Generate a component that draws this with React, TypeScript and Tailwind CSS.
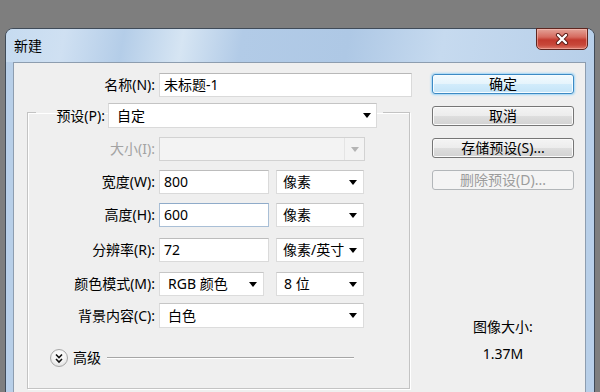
import React from "react";

const Arrow = ({ color = "#000" }: { color?: string }) => (
  <svg width="8" height="5" viewBox="0 0 8 5" className="shrink-0">
    <path d="M0 0H8L4 5Z" fill={color} />
  </svg>
);

const Label = ({ children, disabled }: { children: React.ReactNode; disabled?: boolean }) => (
  <div className={disabled ? "w-[127px] text-right text-[#a3a3a3]" : "w-[127px] text-right"}>{children}</div>
);

export default function App() {
  return (
    <div
      className="w-[600px] h-[392px] overflow-hidden bg-[#7e7e7e] pt-[28px] px-[5px] text-[14px] leading-[18px] text-black"
      style={{ fontFamily: '"Noto Sans", "Noto Sans CJK SC", sans-serif' }}
    >
      <div className="h-[420px] rounded-t-[8px] border border-[#404b58] bg-[#b8cfe8] flex flex-col">
        {/* title bar */}
        <div className="h-[33px] shrink-0 rounded-t-[7px] flex items-start justify-between pl-[8px] pr-[6px] bg-[linear-gradient(100deg,#c6dbf0_0%,#cfe0f2_10%,#b4cde8_20%,#d6e5f3_30%,#b2cbe7_40%,#aec8e5_58%,#c6daef_74%,#b7cfe9_100%)]">
          <div className="mt-[8px] text-black">新建</div>
          <div className="-mt-[1px] w-[52px] h-[22px] rounded-b-[5px] border border-[#5e2620] bg-[linear-gradient(#e3a398_0%,#d66b5f_40%,#c23a2e_55%,#c8483a_80%,#dc7a6c_100%)] shadow-[inset_0_0_0_1px_rgba(255,200,190,0.5)] flex items-center justify-center">
            <svg width="14" height="12" viewBox="0 0 14 12">
              <path d="M3 2L11 10M11 2L3 10" stroke="#5a1c16" strokeWidth="4.2" strokeLinecap="round" />
              <path d="M3 2L11 10M11 2L3 10" stroke="#ffffff" strokeWidth="2.4" strokeLinecap="round" />
            </svg>
          </div>
        </div>

        {/* content */}
        <div className="ml-[7px] mr-[8px] flex-1 border border-[#8d9daf] bg-[#efefef] flex">
          {/* left column */}
          <div className="w-[398px] pt-[10px] flex flex-col">
            <div className="flex items-center h-[24px]">
              <div className="w-[141px] text-right">名称(N):</div>
              <div className="ml-[4px] w-[253px] h-[24px] bg-white border border-[#dadada] border-t-[#b8b8b8] flex items-center pl-[4px]">
                未标题-1
              </div>
            </div>

            <fieldset className="mt-[6px] ml-[13px] w-[383px] border border-[#c3c3c3] shadow-[inset_1px_1px_0_#ffffff,1px_1px_0_#ffffff] pb-[21px]">
              <legend className="ml-[8px] pr-[6px] h-[18px]">
                <div className="flex items-start h-[18px]">
                  <div className="w-[69px] text-right mt-[4px]">预设(P):</div>
                  <div className="ml-[3px] w-[269px] h-[25px] shrink-0 bg-white border border-[#dadada] border-t-[#c4c4c4] flex items-center justify-between pl-[8px] pr-[5px]">
                    <span>自定</span>
                    <Arrow />
                  </div>
                </div>
              </legend>

              <div className="mt-[16px] flex items-center h-[24px]">
                <Label disabled>大小(I):</Label>
                <div className="ml-[4px] w-[206px] h-[24px] bg-[#f3f3f3] border border-[#d2d2d2] flex items-center justify-end">
                  <div className="h-full w-[20px] border-l border-[#e4e4e4] flex items-center justify-center">
                    <Arrow color="#b4b4b4" />
                  </div>
                </div>
              </div>

              <div className="mt-[9px] flex items-center h-[24px]">
                <Label>宽度(W):</Label>
                <div className="ml-[4px] w-[110px] h-[24px] bg-white border border-[#dadada] border-t-[#bcbcbc] flex items-center pl-[4px]">800</div>
                <div className="ml-[7px] w-[88px] h-[24px] bg-white border border-[#dcdcdc] border-t-[#c6c6c6] flex items-center justify-between pl-[6px] pr-[6px]">
                  <span>像素</span>
                  <Arrow />
                </div>
              </div>

              <div className="mt-[9px] flex items-center h-[24px]">
                <Label>高度(H):</Label>
                <div className="ml-[4px] w-[110px] h-[24px] bg-white border border-[#a9bfd6] border-t-[#8fabc9] flex items-center pl-[4px]">600</div>
                <div className="ml-[7px] w-[88px] h-[24px] bg-white border border-[#dcdcdc] border-t-[#c6c6c6] flex items-center justify-between pl-[6px] pr-[6px]">
                  <span>像素</span>
                  <Arrow />
                </div>
              </div>

              <div className="mt-[11px] flex items-center h-[24px]">
                <Label>分辨率(R):</Label>
                <div className="ml-[4px] w-[110px] h-[24px] bg-white border border-[#dadada] border-t-[#bcbcbc] flex items-center pl-[4px]">72</div>
                <div className="ml-[7px] w-[88px] h-[24px] bg-white border border-[#dcdcdc] border-t-[#c6c6c6] flex items-center justify-between pl-[6px] pr-[6px]">
                  <span>像素/英寸</span>
                  <Arrow />
                </div>
              </div>

              <div className="mt-[10px] flex items-center h-[24px]">
                <Label>颜色模式(M):</Label>
                <div className="ml-[4px] w-[105px] h-[24px] bg-white border border-[#dcdcdc] border-t-[#c6c6c6] flex items-center justify-between pl-[8px] pr-[6px]">
                  <span>RGB 颜色</span>
                  <Arrow />
                </div>
                <div className="ml-[12px] w-[88px] h-[24px] bg-white border border-[#dcdcdc] border-t-[#c6c6c6] flex items-center justify-between pl-[7px] pr-[6px]">
                  <span>8 位</span>
                  <Arrow />
                </div>
              </div>

              <div className="mt-[7px] flex items-center h-[25px]">
                <Label>背景内容(C):</Label>
                <div className="ml-[4px] w-[205px] h-[25px] bg-white border border-[#dcdcdc] border-t-[#c6c6c6] flex items-center justify-between pl-[8px] pr-[6px]">
                  <span>白色</span>
                  <Arrow />
                </div>
              </div>

              <div className="mt-[21px] flex items-center h-[18px]">
                <div className="ml-[22px] w-[18px] h-[18px] rounded-full border border-[#a7a7a7] bg-[radial-gradient(circle_at_50%_35%,#ffffff_0%,#f4f4f4_50%,#d6d6d6_100%)] flex items-center justify-center">
                  <svg width="10" height="11" viewBox="0 0 10 11">
                    <path d="M2 1.5L5 4.5L8 1.5M2 6L5 9L8 6" stroke="#111" strokeWidth="1.6" fill="none" />
                  </svg>
                </div>
                <div className="ml-[5px]">高级</div>
                <div className="ml-[6px] mr-[55px] flex-1 h-[2px] border-t border-[#a6a6a6] border-b border-b-white"></div>
              </div>
            </fieldset>
          </div>

          {/* right column */}
          <div className="ml-[20px] w-[142px] pt-[11px] flex flex-col">
            <div className="h-[20px] rounded-[3px] border border-[#3c8ac4] bg-[linear-gradient(#f3fafe_0%,#e5f4fc_50%,#d2ecfb_50%,#c4e4f8_100%)] shadow-[0_0_2px_1px_#9fd6f7,inset_0_0_0_1px_#f6fcff] flex items-center justify-center">确定</div>
            <div className="mt-[12px] h-[20px] rounded-[3px] border border-[#767676] bg-[linear-gradient(#f4f4f4_0%,#ececec_50%,#dedede_50%,#d2d2d2_100%)] shadow-[inset_0_0_0_1px_#fbfbfb] flex items-center justify-center">取消</div>
            <div className="mt-[12px] h-[20px] rounded-[3px] border border-[#767676] bg-[linear-gradient(#f4f4f4_0%,#ececec_50%,#dedede_50%,#d2d2d2_100%)] shadow-[inset_0_0_0_1px_#fbfbfb] flex items-center justify-center">存储预设(S)...</div>
            <div className="mt-[12px] h-[20px] rounded-[3px] border border-[#b2b6b9] bg-[#f4f4f4] flex items-center justify-center text-[#9c9c9c]">删除预设(D)...</div>
            <div className="mt-[128px] text-center">图像大小:</div>
            <div className="mt-[9px] text-center">1.37M</div>
          </div>
        </div>
      </div>
    </div>
  );
}
